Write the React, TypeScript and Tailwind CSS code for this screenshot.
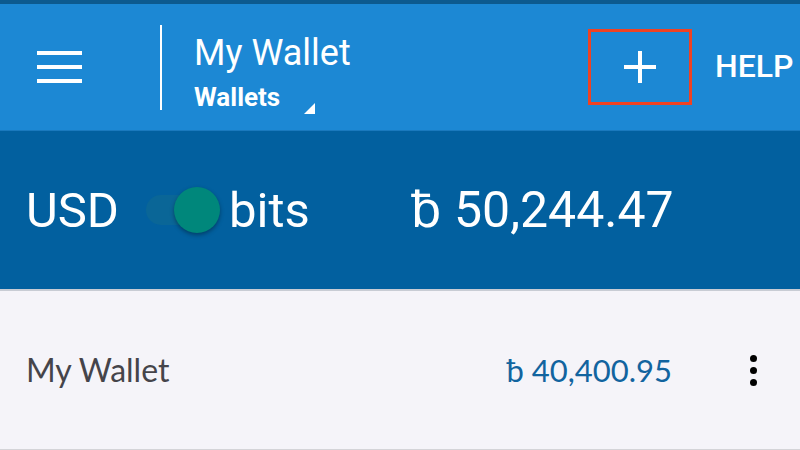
import React from 'react';

const roboto = { fontFamily: 'Roboto, "Noto Sans", sans-serif' };

const Header = () => (
  <div className="h-[126px] bg-[#1c88d4] flex items-center text-white">
    {/* hamburger */}
    <button className="ml-[37px] w-[45px] flex flex-col gap-[10px]">
      <span className="block h-[4px] w-full bg-white" />
      <span className="block h-[4px] w-full bg-white" />
      <span className="block h-[4px] w-full bg-white" />
    </button>
    <div className="ml-[78px] w-[2px] h-[85px] bg-white" />
    <div className="ml-[32px] mt-[9px] flex flex-col">
      <span className="text-[36px] leading-[40px] font-normal">My Wallet</span>
      <div className="mt-[10px] flex items-end">
        <span className="text-[26px] leading-[28px] font-bold">Wallets</span>
        <svg width="11" height="11" viewBox="0 0 11 11" className="ml-[24px] mb-[-3px]">
          <polygon points="11,0 11,11 0,11" fill="white" />
        </svg>
      </div>
    </div>
    <div className="ml-auto mr-[23px] w-[104px] h-[76px] border-[3px] border-[#ef4222] flex items-center justify-center">
      <svg width="32" height="32" viewBox="0 0 32 32">
        <path d="M16 0v32M0 16h32" stroke="white" strokeWidth="4" />
      </svg>
    </div>
    <div className="w-[85px]">
      <span className="text-[32px] font-medium leading-none">HELP</span>
    </div>
  </div>
);

const Toggle = () => (
  <div className="relative w-[74px] h-[46px] shrink-0">
    <div className="absolute left-0 top-[8px] h-[30px] w-[70px] rounded-full bg-[#0a6697]" />
    <div className="absolute left-[28px] top-0 w-[46px] h-[46px] rounded-full bg-[#00877b] shadow-[0_2px_4px_rgba(0,0,0,0.35)]" />
  </div>
);

const BalanceBar = () => (
  <div className="h-[160px] bg-[#02609f] border-b-2 border-[#c8ccd4] flex items-center text-white text-[49px] leading-none">
    <span className="ml-[26px]">USD</span>
    <div className="ml-[27px]">
      <Toggle />
    </div>
    <span className="ml-[9px]">bits</span>
    <span className="ml-[101px] text-[50px]">ƀ 50,244.47</span>
  </div>
);

const WalletRow = () => (
  <div
    className="h-[159px] bg-[#f5f4f9] border-b border-[#d4d4d8] flex items-center text-[32px]"
    style={{ fontFamily: 'Lato, "Noto Sans", sans-serif' }}
  >
    <span className="ml-[26px] text-[#45444a]">My Wallet</span>
    <span className="ml-auto text-[31px] text-[#12649f]">ƀ 40,400.95</span>
    <div className="ml-[78px] mr-[43px] flex flex-col gap-[5px]">
      <span className="block w-[7px] h-[7px] rounded-full bg-black" />
      <span className="block w-[7px] h-[7px] rounded-full bg-black" />
      <span className="block w-[7px] h-[7px] rounded-full bg-black" />
    </div>
  </div>
);

export default function App() {
  return (
    <div className="w-[800px] h-[450px] overflow-hidden bg-[#f5f4f9]" style={roboto}>
      <div className="h-[4px] bg-[#0c5a8f]" />
      <Header />
      <div className="h-px bg-[#1a79bd]" />
      <BalanceBar />
      <WalletRow />
    </div>
  );
}
